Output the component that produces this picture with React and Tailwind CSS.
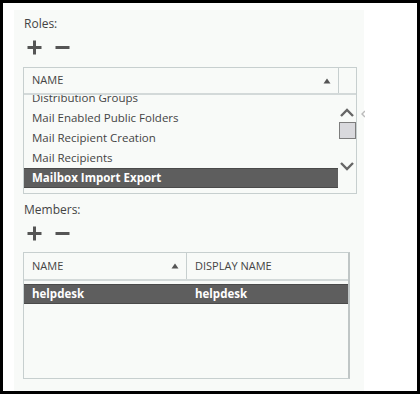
import React from "react";

const font = { fontFamily: '"Open Sans", "Noto Sans", sans-serif' };

function Plus() {
  return (
    <svg width="15" height="15" viewBox="0 0 15 15" className="block">
      <rect x="6" y="0.5" width="3" height="14" fill="#555" />
      <rect x="0.5" y="6" width="14" height="3" fill="#555" />
    </svg>
  );
}
function Minus() {
  return (
    <svg width="15" height="15" viewBox="0 0 15 15" className="block">
      <rect x="0.5" y="6" width="14" height="3" fill="#555" />
    </svg>
  );
}
function Tri() {
  return (
    <svg width="8" height="6" viewBox="0 0 8 6" className="block">
      <polygon points="4,0.5 7.5,5.5 0.5,5.5" fill="#555" />
    </svg>
  );
}
function Chevron({ up }) {
  return (
    <svg width="16" height="10" viewBox="0 0 16 10" className="block">
      <polyline
        points={up ? "2,8 8,2 14,8" : "2,2 8,8 14,2"}
        fill="none"
        stroke="#666"
        strokeWidth="2.4"
      />
    </svg>
  );
}

function AddRemove() {
  return (
    <div className="flex items-center gap-[13px] pl-[4px]">
      <Plus />
      <Minus />
    </div>
  );
}

export default function App() {
  const roles = [
    "Distribution Groups",
    "Mail Enabled Public Folders",
    "Mail Recipient Creation",
    "Mail Recipients",
  ];
  return (
    <div className="w-[420px] h-[394px] bg-black p-[3px]" style={font}>
      <div className="w-full h-full bg-white pl-[11px] pt-[7px]">
        <div className="relative w-[350px] h-[381px] bg-[#f8faf8] pl-[9px] pt-[5px] text-[#444]">
          <div className="text-[12px] leading-[18px] pl-[1px]">Roles:</div>
          <div className="mt-[7px]">
            <AddRemove />
          </div>
          <div className="mt-[12px] w-[334px] h-[127px] border border-[#c7cfcf] flex flex-col">
            <div className="flex h-[27px] border-b-2 border-[#d3d9d9] shrink-0">
              <div className="flex-1 flex items-center justify-between pl-[8px] pr-[7px] text-[11px]">
                <span>NAME</span>
                <Tri />
              </div>
              <div className="w-[18px] border-l border-[#c7cfcf]" />
            </div>
            <div className="flex flex-1 overflow-hidden">
              <div className="flex-1 overflow-hidden">
                <div className="-mt-[7px]">
                  {roles.map((r) => (
                    <div key={r} className="h-[20px] flex items-center pl-[8px] text-[11.5px]">
                      {r}
                    </div>
                  ))}
                  <div className="h-[20px] flex items-center pl-[8px] text-[11.5px] font-bold text-white bg-[#5e5e5e] border-y border-[#4a4a4a]">
                    Mailbox Import Export
                  </div>
                </div>
              </div>
              <div className="w-[18px] flex flex-col items-center">
                <div className="mt-[13px]">
                  <Chevron up />
                </div>
                <div className="mt-[4px] w-[17px] h-[17px] bg-[#d9d9dd] border border-[#7d7d7d]" />
                <div className="mt-[22px]">
                  <Chevron />
                </div>
              </div>
            </div>
          </div>
          <svg
            width="4"
            height="8"
            viewBox="0 0 4 8"
            className="absolute left-[347px] top-[100px] block"
          >
            <polyline points="4,1 1,4 4,7" fill="none" stroke="#bbb" strokeWidth="1.4" />
          </svg>

          <div className="mt-[7px] text-[12px] leading-[18px] pl-[1px]">Members:</div>
          <div className="mt-[7px]">
            <AddRemove />
          </div>
          <div className="mt-[11px] w-[327px] h-[127px] border border-[#c7cfcf] border-r-2 border-r-[#c0c6c6] flex flex-col">
            <div className="flex h-[28px] border-b-2 border-[#d3d9d9] shrink-0 text-[11px]">
              <div className="w-[163px] flex items-center justify-between pl-[8px] pr-[7px] border-r border-[#c7cfcf]">
                <span>NAME</span>
                <Tri />
              </div>
              <div className="flex-1 flex items-center pl-[8px]">DISPLAY NAME</div>
            </div>
            <div className="mt-[3px] h-[20px] flex items-center text-[11.5px] font-bold text-white bg-[#5e5e5e] border-y border-[#4a4a4a]">
              <div className="w-[163px] pl-[8px]">helpdesk</div>
              <div className="pl-[8px]">helpdesk</div>
            </div>
          </div>
        </div>
      </div>
    </div>
  );
}
